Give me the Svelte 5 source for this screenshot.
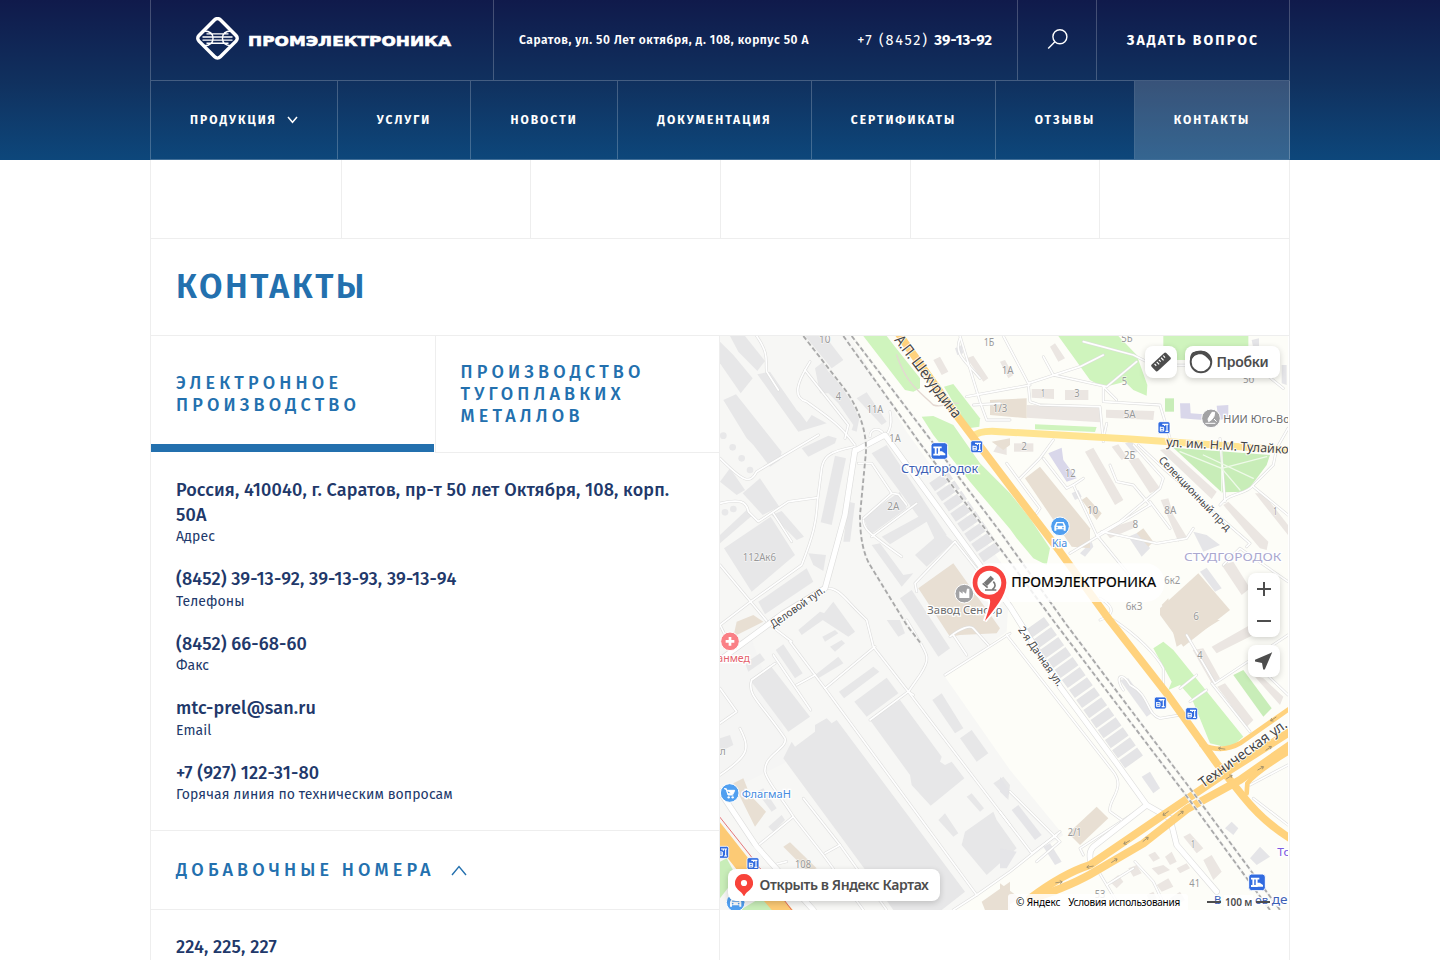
<script>
  const nav = [
    { t: 'Продукция', w: 187, arrow: true },
    { t: 'Услуги', w: 133 },
    { t: 'Новости', w: 147 },
    { t: 'Документация', w: 194 },
    { t: 'Сертификаты', w: 184 },
    { t: 'Отзывы', w: 139 },
    { t: 'Контакты', w: 155, active: true }
  ];
  const contacts = [
    ['Россия, 410040, г. Саратов, пр-т 50 лет Октября, 108, корп. 50А', 'Адрес'],
    ['(8452) 39-13-92, 39-13-93, 39-13-94', 'Телефоны'],
    ['(8452) 66-68-60', 'Факс'],
    ['mtc-prel@san.ru', 'Email'],
    ['+7 (927) 122-31-80', 'Горячая линия по техническим вопросам']
  ];

  // Map geometry uses three units per screen pixel.
  const industrial = [
    '0,85 0,20 40,60 98,130 62,175', '30,3 75,3 135,78 112,108 55,50',
    '10,195 48,178 185,350 180,375 150,395 100,330 80,310', '112,118 150,110 230,225 240,235 260,262 275,240 320,265 235,290',
    '255,3 315,3 370,75 335,100', '285,100 310,80 325,110 345,125 420,240 410,290 395,285 400,270 355,205 325,175 300,175',
    '410,190 440,172 500,260 485,270', '345,362 378,370 335,570 302,562', '245,340 325,302 350,310 345,325 265,365',
    '68,475 120,430 178,515 128,540', '12,640 152,545 225,660 95,770', '0,600 80,525 98,540 0,625',
    '155,540 185,528 252,605 230,615', '115,800 260,700 280,740 135,838', '455,355 500,330 680,600 650,625 620,560 510,628 485,605 595,545',
    '430,545 540,470 560,520 450,600', '585,660 665,590 700,620 620,695', '455,630 480,625 550,720 580,715 545,755',
    '385,500 405,505 390,620 370,620', '265,655 318,660 310,708 280,690', '0,440 30,400 75,465 50,480',
    '540,790 575,765 690,940 655,965', '235,885 300,830 330,840 245,900', '300,850 340,800 405,890 385,905', '90,1035 150,990 270,1145 205,1190',
    '167,945 190,928 248,1015 225,1030', '285,1020 355,965 370,985 295,1030', '307,905 345,885 355,895 315,920', '330,935 365,915 375,925 345,950',
    '75,985 120,955 135,975 85,1010', '357,1070 460,995 478,1010 372,1090', '403,1100 500,1028 535,1075 440,1145',
    '450,1155 540,1095 665,1265 660,1280 675,1290 695,1280 733,1330 632,1412 575,1350 570,1320',
    '190,1270 215,1220 225,1235 285,1190 285,1170 320,1150 335,1165 350,1155 735,1670 665,1725 520,1725 440,1610',
    '637,1095 665,1075 730,1180 705,1195', '720,1210 755,1185 805,1255 770,1280', '655,1455 675,1435 715,1495 700,1505', '740,1385 755,1375 792,1420 780,1430',
    '735,1490 820,1430 830,1455 890,1540 800,1620 725,1530', '820,1345 850,1325 870,1350 865,1395', '110,1370 130,1360 170,1420 155,1430', '145,1475 185,1440 195,1455 160,1490',
    '500,855 540,855 555,895 535,905', '0,1210 30,1200 40,1230 0,1250'
  ];
  const homes = [
    '740,70 760,62 805,130 790,140', '840,80 855,75 880,120 865,130', '640,75 660,65 685,110 665,120', '990,35 1005,25 1035,70 1015,80',
    '935,162 1002,162 1002,192 935,188', '1035,165 1105,165 1105,195 1035,195', '920,210 1140,215 1140,262 920,248', '1158,224 1303,228 1300,255 1158,248',
    '882,325 940,325 940,350 882,350', '1095,350 1120,338 1210,495 1185,510 1140,430', '1175,335 1195,328 1220,365 1205,375', '1225,375 1255,368 1320,460 1290,475',
    '1320,345 1345,340 1490,470 1475,492', '1322,495 1345,490 1360,540 1400,605 1375,620', '1510,510 1525,500 1645,620 1640,645 1620,640',
    '1150,585 1245,555 1240,580 1170,610', '1505,690 1540,680 1590,760 1565,780', '1605,475 1630,475 1704,570 1704,600', '820,350 840,315 860,340 860,360',
    '1475,935 1590,870 1610,895 1490,955', '1418,945 1450,940 1500,1030 1475,1045', '1492,1055 1515,1045 1600,1155 1580,1175', '1600,1020 1630,1030 1690,1085 1680,1110',
    '1390,1505 1410,1495 1450,1540 1430,1555', '1450,1575 1475,1560 1505,1610 1480,1635', '1225,1600 1250,1590 1265,1615 1240,1625', '1285,1560 1305,1550 1320,1570 1300,1580',
    '1295,1600 1330,1590 1350,1605 1315,1620', '1335,1565 1355,1550 1370,1580 1350,1590', '1310,1650 1345,1630 1360,1655 1325,1670', '1370,1600 1400,1585 1410,1600 1380,1615',
    '1280,1680 1300,1670 1310,1690 1290,1700', '1350,1690 1380,1670 1395,1695 1370,1710', '1170,1640 1195,1620 1210,1640 1190,1660'
  ];
  const grayHomes = [
    '1215,325 1235,318 1255,350 1240,355', '1225,605 1260,590 1290,640 1265,665', '1420,590 1460,600 1500,630 1450,650', '1440,710 1460,698 1505,760 1485,770',
    '1080,655 1115,620 1120,635 1095,665', '1055,475 1075,465 1085,485 1065,495', '1200,1035 1225,1030 1300,1130 1280,1145', '1265,1325 1290,1310 1320,1360 1300,1375',
    '1515,1480 1535,1460 1555,1480 1540,1500', '1590,1570 1620,1535 1650,1565 1610,1590', '1685,90 1700,90 1700,150 1685,145', '1595,15 1617,10 1617,40 1600,40',
    '875,1425 895,1410 965,1500 945,1515', '970,1535 990,1525 1025,1580 1005,1590', '840,1540 890,1550 860,1600 840,1600', '840,1325 870,1370 860,1390 840,1370', '705,40 725,30 730,55 712,60'
  ];
  const shops = [
    '595,760 700,685 840,880 830,895 720,900 690,905', '810,195 920,190 920,250 810,240', '915,430 960,395 1110,580 1110,640 1055,635',
    '1320,820 1435,715 1530,825 1390,935 1320,840', '1045,1495 1130,1415 1165,1450 1080,1530', '40,1345 70,1330 90,1380 138,1430 105,1475', '190,1535 210,1522 290,1600 265,1610',
    '785,1700 870,1640 870,1725 795,1725', '1325,810 1345,790 1350,820 1340,830', '1250,595 1270,580 1300,620 1285,635', '1370,935 1500,855 1350,855', '50,860 100,840 130,860 40,905', '815,320 870,310 870,330 850,345', '665,855 700,895 750,855', '1085,495 1100,485 1145,535 1130,555', '840,1645 900,1690 840,1725'
  ];
  const purple = ['1380,205 1410,205 1412,235 1450,238 1450,255 1382,250', '1490,212 1525,210 1525,250 1495,255', '985,355 1025,338 1030,375 1070,430 1040,440'];
  const greens = [
    '430,3 500,3 525,35 600,130 600,160 580,170 555,165', '672,155 700,147 780,250 778,275 745,280', '605,245 640,243 700,270 780,385 870,475 930,550 990,640 980,690 940,670 890,610 870,582 750,440 640,300',
    '1015,3 1195,3 1250,60 1282,150 1280,182 1240,165 1215,140 1150,157 1110,135', '1330,3 1585,3 1585,75 1330,75', '945,268 1130,276 1125,291 945,283',
    '1300,940 1330,920 1360,945 1570,1205 1530,1240 1470,1225 1415,1090 1380,1050 1345,1065 1355,1040'
  ];
  const parks = ['1360,338 1650,360 1640,390 1580,470 1505,472', '1335,190 1362,190 1362,230 1335,230', '1540,1020 1570,1005 1655,1120 1630,1145', '0,1580 20,1570 50,1625 0,1690', '60,1725 120,1690 180,1725', '980,1675 1000,1660 1010,1680 970,1690'];
  const lanes = [
    'M110,3 C150,60 135,80 140,110 L175,165', 'M270,80 C220,160 225,190 260,200 C330,250 360,270 405,330', 'M255,105 L385,270 L375,310', 'M295,300 L110,410 C90,450 70,440 0,370',
    'M405,335 C320,350 310,370 305,400 L292,500 C290,560 280,600 245,690 L85,805 L0,870', 'M0,505 C60,490 80,500 85,530 L115,560 L205,500 L292,488', 'M0,690 L150,870 L215,920', 'M160,535 L215,620',
    'M415,385 L455,385 L515,475 L535,478 L560,510', 'M430,550 L515,475', 'M430,555 C430,580 440,590 545,665', 'M455,605 L590,505', 'M705,620 L585,745 L590,770', 'M705,620 L800,740',
    'M325,760 C360,760 380,800 440,855 L460,935 L565,1070 L870,1470', 'M450,305 C450,280 480,270 500,310', 'M510,230 C520,280 500,300 495,300', 'M0,870 L30,930',
    'M210,920 L315,1060 L770,1680', 'M160,960 L272,1125', 'M315,1060 L465,935', 'M230,1050 L285,1020', 'M165,985 L95,1035 C80,1080 120,1100 195,1210 C205,1240 130,1260 135,1310 C140,1340 180,1380 220,1445 L310,1560 L430,1725',
    'M220,1445 L110,1535', 'M250,1390 L360,1530 L315,1555', 'M360,1530 L500,1725', 'M450,1155 L565,1070 L600,1020 C640,960 620,960 560,855', 'M565,1070 L580,1080', 'M60,1180 C90,1240 90,1260 0,1320', 'M0,1060 L50,1130 L0,1165',
    'M675,1020 L870,895', 'M690,905 C720,880 750,870 760,880 L805,930', 'M700,900 L740,960', 'M700,1725 L770,1680 L870,1610 L1020,1490', 'M720,10 C700,60 740,80 780,130', 'M720,3 L780,200 L800,255 L870,255', 'M850,3 L925,145 L1080,95 L1150,60', 'M740,185 L930,150', 'M970,65 L1000,120 L1160,155 L1250,80',
    'M840,205 L760,210', 'M925,150 L930,200 L960,210 L1140,215 L1150,320', 'M1150,155 L1150,200 L1320,210 L1350,310', 'M1150,155 L1190,195', 'M1090,20 L1240,60 L1300,90 L1600,92', 'M1590,80 L1690,160', 'M1160,265 L1150,310', 'M1000,315 L960,370 L900,430', 'M970,370 L1040,460 L1060,450 L1130,600 L1200,560 L1320,460 L1330,430 L1240,330', 'M1060,450 L1090,430 M1170,390 L1190,440 L1240,450 L1290,510', 'M860,385 C900,440 930,480 960,520 L950,535', 'M1050,655 L1290,510', 'M1130,600 L1260,760 L1300,740', 'M1145,590 L1310,625 L1400,610 L1420,580', 'M1255,330 L1330,400 L1590,625 L1580,635', 'M1500,510 C1530,470 1580,480 1600,450 L1660,390 L1670,340 L1704,280', 'M1500,310 L1515,500', 'M1600,455 L1704,540', 'M1510,690 L1560,640 L1704,740', 'M1290,500 L1350,580', 'M1140,855 C1180,840 1190,820 1140,790',
    'M860,900 L1180,1310 C1220,1360 1160,1400 1170,1430 L1205,1455', 'M1210,1065 C1180,1020 1210,1010 1230,1050 C1290,1080 1280,1140 1320,1150 L1380,1140', 'M1180,855 C1250,900 1310,960 1330,1000 L1330,1060', 'M1400,900 L1485,1045 L1704,900', 'M1380,1060 L1430,1020 M1410,1100 L1460,1065', 'M1475,1045 L1590,1190', 'M1590,970 L1704,1080', 'M870,1370 L1020,1520 L950,1580', 'M840,1430 L935,1555 L1010,1500', 'M1280,1410 L1080,1540 L1090,1560', 'M1590,1350 L1704,1290', 'M1600,1390 L1704,1470', 'M1130,1600 L1190,1700', 'M1245,1580 L1300,1640 L1340,1725', 'M115,1535 L160,1590 L200,1580', 'M1240,1600 L1160,1650'
  ];
  const sheds = ['M655,425 L820,665', 'M945,865 L1245,1285'];
  const numbers = [
    ['10', 314, 24, 34], ['4', 355, 195, 16], ['11А', 465, 235, 50], ['1А', 525, 322, 34], ['2А', 520, 526, 36], ['112Ак6', 118, 678, 100], ['1Б', 807, 32, 32], ['1А', 863, 116, 36],
    ['5Б', 1221, 20, 34], ['5', 1213, 150, 16], ['1', 969, 186, 12], ['3', 1071, 187, 16], ['1/3', 840, 230, 44], ['5А', 1229, 250, 36], ['5б', 1586, 143, 34], ['2', 912, 346, 17], ['2Б', 1229, 373, 34], ['12', 1051, 427, 32],
    ['10', 1118, 537, 32], ['8А', 1351, 537, 36], ['8', 1246, 580, 17], ['1', 1666, 539, 12], ['6к2', 1357, 746, 48], ['6к3', 1242, 826, 50], ['6', 1428, 855, 17], ['4', 1440, 973, 16], ['2/1', 1064, 1504, 42], ['1', 1419, 1538, 12], ['41', 1424, 1657, 32], ['108', 249, 1599, 48], ['53', 1140, 1690, 32], ['л', 8, 1260, 18]
  ];
  const arrows = [[1337,1435,145],[1220,1522,150],[1110,1595,170],[1017,1642,-8],[1382,1435,-38],[1277,1513,-38],[1183,1577,-32],[1528,1326,-32],[1646,1240,-34],[1622,1300,-30],[1660,1152,145],[1505,1241,188]];
  const stops = [[770, 335], [1332, 278], [1321, 1104], [1415, 1136], [8, 1552], [99, 1586]];
  const railways = ['M370 3L600 325L840 640L1010 870L1390 1370L1650 1725', 'M395 3L640 325L840 590L1040 870L1410 1360L1680 1725', 'M250 3L380 170Q440 260 438 350L420 540Q420 640 450 690L560 870L603 926'];
</script>

<div class="page">
  <header>
    <div class="wrap">
      <div class="top">
        <div class="logo">
          <svg width="256" height="44" viewBox="0 0 256 44">
            <g fill="none" stroke="#fff">
              <rect x="6.400" y="6.200" width="30.200" height="30.200" rx="4" stroke-width="3.500" transform="rotate(45 21.500 21.300)" />
              <path stroke-width="1.400" d="M10.500 16.900H32.500M6.500 20H36.500M6.500 23.100H36.500M10.500 26.200H32.500M8 14Q17 14 17 21.500Q17 28.500 8 28.800M35 14Q26.500 14 26.500 21.500Q26.500 28.500 35 28.800" />
            </g>
            <text x="52" y="29" class="brand" textLength="203" lengthAdjust="spacingAndGlyphs">ПРОМЭЛЕКТРОНИКА</text>
          </svg>
        </div>
        <div class="info">
          <span class="addr">Саратов, ул. 50 Лет октября, д. 108, корпус 50 А</span>
          <span class="tel">+7 (8452) <b>39-13-92</b></span>
        </div>
        <button class="find" aria-label="Поиск">
          <svg width="22" height="22" viewBox="0 0 22 22" fill="none" stroke="#fff" stroke-width="1.400"><circle cx="13.900" cy="8.700" r="7" /><path d="M8.900 13.700L2.200 20.500" /></svg>
        </button>
        <button class="ask">Задать вопрос</button>
      </div>
      <nav>
        {#each nav as n}
          <a href="#top" class:active={n.active} style="width:{n.w}px">
            <span>{n.t}</span>
            {#if n.arrow}<svg width="11" height="8" viewBox="0 0 11 8" fill="none" stroke="#fff" stroke-width="1.500"><path d="M1 1L5.500 6.300L10 1" /></svg>{/if}
          </a>
        {/each}
      </nav>
    </div>
  </header>

  <main>
    <div class="strip"><i></i><i></i><i></i><i></i><i></i></div>
    <div class="title"><h1>Контакты</h1></div>
    <div class="cols">
      <section class="left">
        <div class="tabs">
          <div class="tab on"><span>Электронное<br />производство</span></div>
          <div class="tab"><span>Производство<br />тугоплавких<br />металлов</span></div>
        </div>
        <div class="list">
          {#each contacts as [v, l]}
            <div class="item"><strong>{v}</strong><small>{l}</small></div>
          {/each}
        </div>
        <div class="more">
          <span>Добавочные номера</span>
          <svg width="16" height="11" viewBox="0 0 16 11" fill="none" stroke="#2370ae" stroke-width="1.400"><path d="M1 10L8 1.500L15 10" /></svg>
        </div>
        <div class="list"><div class="item"><strong>224, 225, 227</strong></div></div>
      </section>

      <section class="map">
        <svg class="canvas" width="568" height="574" viewBox="0 3 1704 1722">
          <rect y="3" width="1704" height="1722" fill="#fdfdf8" />
          <path fill="#f7f7f5" d="M0 3H390L560 290L870 720L860 890L675 1025L870 1305L1030 1500L700 1725H0Z" />
          <path fill="#f3f3f3" opacity=".7" d="M0 950L90 900L220 1270L0 1380Z" />
          {#each greens as p}<polygon points={p} fill="#cff4bd" />{/each}
          {#each parks as p}<polygon points={p} fill="#c8edb8" />{/each}
          {#each industrial as p}<polygon points={p} fill="#e7e7e8" />{/each}
          {#each homes as p}<polygon points={p} fill="#ebe6e2" />{/each}
          {#each grayHomes as p}<polygon points={p} fill="#e5e5e8" />{/each}
          {#each shops as p}<polygon points={p} fill="#e8dfd3" />{/each}
          {#each purple as p}<polygon points={p} fill="#d9d7ea" />{/each}
          {#each [[10, 302], [38, 337], [65, 370], [90, 405], [15, 532], [40, 522]] as [x, y]}<circle cx={x} cy={y} r="10" fill="#e8e8e9" />{/each}
          {#each sheds as d}<path {d} fill="none" stroke="#e4e4e6" stroke-width="66" stroke-dasharray="30 7" />{/each}
          <g fill="none" stroke-linejoin="round" stroke-linecap="round">
            {#each lanes as d}<path {d} stroke="#dededd" stroke-width="8.500" />{/each}
            {#each lanes as d}<path {d} stroke="#fff" stroke-width="5" />{/each}
            <path stroke="#eefae8" stroke-width="4" d="M1380 350L1505 400L1640 365M1505 350V470M1450 360L1600 430M1505 400L1560 465" />
            <g stroke="#dededd" stroke-width="19">
              <path d="M410 345L495 300L870 815L1020 1055L1190 1285L1280 1410L1350 1450L1370 1530L1490 1670M1280 1410L1120 1535Q1105 1550 1112 1580" />
              <path d="M405 345L375 540L315 760L190 835L0 975" />
              <path d="M0 1370L110 1535L280 1725" />
            </g>
            <g stroke="#fff" stroke-width="15">
              <path d="M410 345L495 300L870 815L1020 1055L1190 1285L1280 1410L1350 1450L1370 1530L1490 1670M1280 1410L1120 1535Q1105 1550 1112 1580" />
              <path d="M405 345L375 540L315 760L190 835L0 975" />
              <path d="M0 1370L110 1535L280 1725" />
            </g>
            <path stroke="#fcca75" stroke-width="48" d="M-20 1475L70 1590L200 1740" />
            <path stroke="#f7f7f5" stroke-width="18" d="M0 1440L110 1560L250 1740" />
            <path stroke="#e05b60" stroke-width="2.500" d="M0 1447L90 1560L215 1725" />
            <path stroke="#e4d8d2" stroke-width="4" d="M530 60C560 150 600 170 640 210C670 220 690 200 715 205" />
            <path stroke="#ffe491" stroke-width="21" d="M760 305Q775 285 840 290L1230 312L1704 345" />
            <path stroke="#ffd27d" stroke-width="23" d="M535 -5L715 248L860 440L1020 650L1170 857L1340 1075L1490 1285L1570 1385Q1630 1460 1710 1510" />
            <path stroke="#ffd27d" stroke-width="24" d="M930 1690Q1030 1615 1110 1590L1330 1440L1530 1305L1710 1190" />
            <path stroke="#ffd27d" stroke-width="24" d="M940 1690Q1060 1650 1130 1607L1270 1525L1400 1423L1560 1335L1710 1230" />
            <path stroke="#ffd27d" stroke-width="14" d="M1445 1230Q1510 1255 1560 1225L1710 1120M1580 1375L1582 1345Q1610 1310 1710 1250" />
          </g>
          <g fill="none">
            {#each railways as d}
              <path {d} stroke="#f4f4f2" stroke-width="8" />
              <path {d} stroke="#a9a9a9" stroke-width="5.500" stroke-dasharray="14 8" />
            {/each}
          </g>
          {#each arrows as [x, y, r]}<g transform="translate({x} {y}) rotate({r})"><path d="M-11 0H9M3 -5L10 0L3 5" fill="none" stroke="#a08f6c" stroke-width="2.500" /></g>{/each}

          <g class="num">
            {#each numbers as [t, x, y, w]}<text {x} {y} textLength={w} lengthAdjust="spacingAndGlyphs">{t}</text>{/each}
          </g>
          <g class="street">
            <text transform="translate(522 16) rotate(52.500)" textLength="298" lengthAdjust="spacingAndGlyphs" font-size="45">А.П. Шехурдина</text>
            <text transform="translate(1338 334) rotate(3.500)" textLength="368" lengthAdjust="spacingAndGlyphs" font-size="38">ул. им. Н.М. Тулайко</text>
            <text transform="translate(1314 377) rotate(46)" textLength="296" lengthAdjust="spacingAndGlyphs" font-size="32">Селекционный пр-д</text>
            <text transform="translate(160 880) rotate(-35)" textLength="192" lengthAdjust="spacingAndGlyphs" font-size="32">Деловой туп.</text>
            <text transform="translate(893 884) rotate(55)" textLength="210" lengthAdjust="spacingAndGlyphs" font-size="32">2-я Дачная ул.</text>
            <text transform="translate(1450 1360) rotate(-36)" textLength="315" lengthAdjust="spacingAndGlyphs" font-size="43">Техническая ул.</text>
          </g>
          <g class="poi">
            <text x="543" y="414" font-size="36" fill="#3d5fb5" textLength="232" lengthAdjust="spacingAndGlyphs">Студгородок</text>
            <text x="1392" y="679" font-size="35" fill="#aaa8cf" textLength="292" lengthAdjust="spacingAndGlyphs">СТУДГОРОДОК</text>
            <text x="1510" y="264" font-size="32" fill="#6c6c6c" textLength="230" lengthAdjust="spacingAndGlyphs">НИИ Юго-Вост</text>
            <text x="996" y="636" font-size="32" fill="#458be0" textLength="46" lengthAdjust="spacingAndGlyphs">Kia</text>
            <text x="622" y="838" font-size="32" fill="#6c6c6c" textLength="225" lengthAdjust="spacingAndGlyphs">Завод Сенсор</text>
            <text x="-8" y="981" font-size="32" fill="#e4626b" textLength="98" lengthAdjust="spacingAndGlyphs">анмед</text>
            <text x="65" y="1388" font-size="32" fill="#458be0" textLength="148" lengthAdjust="spacingAndGlyphs">ФлагмаН</text>
            <text x="1672" y="1563" font-size="32" fill="#7b5be0" textLength="62" lengthAdjust="spacingAndGlyphs">Топ</text>
            <text x="1482" y="1708" font-size="34" fill="#3d5fb5">В</text>
            <text x="1605" y="1708" font-size="34" fill="#3d5fb5" textLength="40" lengthAdjust="spacingAndGlyphs">ов</text>
            <text x="1655" y="1708" font-size="36" fill="#3d5fb5" textLength="72" lengthAdjust="spacingAndGlyphs">деп</text>
          </g>
          <g stroke="#fff" stroke-width="3">
            <circle cx="1020" cy="574" r="28" fill="#509ff0" />
            <circle cx="29" cy="1374" r="28" fill="#509ff0" />
            <circle cx="47" cy="1702" r="28" fill="#509ff0" />
            <circle cx="30" cy="919" r="28" fill="#fa8086" />
            <circle cx="1473" cy="250" r="28" fill="#a2a2a4" />
            <circle cx="733" cy="776" r="28" fill="#a2a2a4" />
          </g>
          {#each [[1020, 574], [47, 1702]] as [x, y]}
            <g transform="translate({x} {y})"><path d="M-17 13V-1L-11 -13H11L17 -1V13H11V9H-11V13Z" fill="#fff" /><path d="M-8 -9H8L11 -2H-11Z" fill="#509ff0" /><circle cx="-9" cy="4" r="2.500" fill="#509ff0" /><circle cx="9" cy="4" r="2.500" fill="#509ff0" /></g>
          {/each}
          <path d="M12 1361H19L24 1380H40M20 1366H44L40 1376H23Z" fill="#fff" stroke="#fff" stroke-width="3" /><circle cx="26" cy="1387" r="3.500" fill="#fff" /><circle cx="38" cy="1387" r="3.500" fill="#fff" />
          <path d="M30 906V932M17 919H43" stroke="#fff" stroke-width="8" />
          <path d="M1484 232L1482 244Q1478 254 1466 260L1464 252L1476 232ZM1456 265H1486M1482 252L1490 260" fill="#fff" stroke="#fff" stroke-width="3" />
          <path d="M718 789V769L728 776V769L738 776L741 761H748V789Z" fill="#fff" />

          {#each [[658, 348], [1611, 1642]] as [x, y]}
            <g transform="translate({x} {y})"><rect x="-25" y="-25" width="50" height="50" rx="9" fill="#316be0" stroke="#fff" stroke-width="3" /><path d="M-18 -11H7M-11 -11V10M-1 -11V2M-18 11H2" fill="none" stroke="#fff" stroke-width="5.500" /><path d="M-4 13V1H8L18 8V13Z" fill="#fff" /></g>
          {/each}
          {#each stops as [x, y]}
            <g transform="translate({x} {y})"><rect x="-18" y="-18" width="36" height="36" rx="6" fill="#316be0" stroke="#fff" stroke-width="2.500" /><path d="M-5 -10H13M9 -10V10M4 11H13M2 -10V-5" fill="none" stroke="#fff" stroke-width="3.500" /><path d="M-11 -3V11M-11 -1H-1V10H-11M-11 5H-2" fill="none" stroke="#fff" stroke-width="3" /></g>
          {/each}

          <rect x="755" y="685" width="578" height="116" rx="56" fill="#fff" opacity=".82" />
          <path d="M809 688C777 688 753 713 753 744C753 773 774 794 802 797C810 806 797 829 789 857L800 861C826 826 863 792 863 744C863 713 840 688 809 688Z" fill="#fff" />
          <path d="M808 692C780 692 758 715 758 743C758 770 780 791 806 792C814 793 812 808 795 858C822 823 859 783 859 743C859 715 836 692 808 692Z" fill="#f8433f" />
          <circle cx="808" cy="743" r="36" fill="#fff" />
          <g fill="none" stroke="#777"><path stroke-width="14" d="M796 748L817 727" /><path stroke-width="5" d="M820 740Q832 752 817 764M795 765H829M788 745L803 758" /></g>
          <text x="874" y="757" class="place" textLength="434" lengthAdjust="spacingAndGlyphs">ПРОМЭЛЕКТРОНИКА</text>
        </svg>

        <button class="ctl ruler" aria-label="Линейка">
          <svg width="20" height="20" viewBox="0 0 20 20"><g transform="rotate(-43 10 10)"><rect x="0" y="5.500" width="20" height="9" rx="1.500" fill="#4d4d4d" /><path d="M4 7V9.500M7 7V10.500M10 7V9.500M13 7V10.500M16 7V9.500" stroke="#fff" stroke-width="1.200" /></g></svg>
        </button>
        <button class="ctl jams">
          <svg width="24" height="24" viewBox="0 0 24 24" fill="none"><circle cx="12" cy="12" r="10.300" stroke="#4d4d4d" stroke-width="1.900" /><path d="M1 8.500C1.500 4.500 3 2 5 2C7 1 9 .8 12 .8C17 .8 22 4.500 23 11L22.500 14C20.500 9.500 17 6 13.500 4.500C9 3.300 4 5.500 2 10.500Z" fill="#4d4d4d" /></svg>
          <span>Пробки</span>
        </button>
        <div class="ctl zoom">
          <button aria-label="Приблизить"><svg width="14" height="14" viewBox="0 0 14 14"><path d="M0 7H14M7 0V14" stroke="#4d4d4d" stroke-width="2" /></svg></button>
          <button aria-label="Отдалить"><svg width="14" height="14" viewBox="0 0 14 14"><path d="M0 7H14" stroke="#4d4d4d" stroke-width="2" /></svg></button>
        </div>
        <button class="ctl geo" aria-label="Моё местоположение">
          <svg width="18" height="18" viewBox="0 0 18 18"><path d="M17.200 .3L0 7.700V9.400L7 11L8.200 17.500H9.800Z" fill="#4d4d4d" /></svg>
        </button>
        <button class="ctl open">
          <svg width="18" height="22" viewBox="0 0 18 22"><path d="M9 0A9 9 0 0 0 3 15.700C5.500 17.800 7.500 19 8.400 21.500Q9 22.500 9.600 21.500C10.500 19 12.500 17.800 15 15.700A9 9 0 0 0 9 0Z" fill="#f8433a" /><circle cx="9" cy="9" r="3.100" fill="#fff" /></svg>
          <span>Открыть в Яндекс Картах</span>
        </button>
        <div class="copy"><span>© Яндекс</span><span>Условия использования</span></div>
        <div class="scale"><i></i><span>100 м</span><i></i></div>
      </section>
    </div>
  </main>
</div>

<style>
  :global(body) { margin: 0; background: #fff; overflow: hidden; }
  .page { height: 960px; overflow: hidden; font-family: "Fira Sans", "Open Sans", "Noto Sans", sans-serif; color: #21386a; }
  button { border: 0; background: none; padding: 0; font: inherit; color: inherit; display: flex; align-items: center; justify-content: center; }
  header { height: 160px; background: linear-gradient(#101a4b, #10315f 52%, #0d477b); color: #fff; }
  .wrap { width: 1140px; height: 160px; margin: 0 auto; box-sizing: border-box; border-left: 1px solid #ffffff38; border-bottom: 1px solid #ffffff38; }
  .top { display: flex; height: 80px; border-bottom: 1px solid #ffffff38; }
  .top > * { border-right: 1px solid #ffffff38; box-sizing: border-box; }
  .logo { width: 343px; padding: 17px 0 0 45px; }
  .brand { font: 900 14.500px "DejaVu Sans", sans-serif; fill: #fff; stroke: #fff; stroke-width: .6; }
  .info { width: 524px; display: flex; align-items: center; justify-content: space-between; padding: 0 25px; white-space: nowrap; }
  .addr { font-size: 12px; font-weight: 600; letter-spacing: .54px; }
  .tel { font-size: 14.500px; letter-spacing: 1.750px; }
  .tel b { font-size: 15px; font-weight: 700; letter-spacing: 0; }
  .find { width: 79px; padding-bottom: 3px; }
  .ask { width: 193px; font-size: 14px; font-weight: 700; letter-spacing: 2.100px; text-transform: uppercase; }
  nav { display: flex; height: 78px; }
  nav a { box-sizing: border-box; border-right: 1px solid #ffffff38; display: flex; align-items: center; justify-content: center; gap: 10px; color: #fff; text-decoration: none; text-transform: uppercase; font-size: 12px; font-weight: 700; letter-spacing: 2px; }
  nav a.active { background: #ffffff2b; }

  main { width: 1138px; margin: 0 auto; border: solid #eee; border-width: 0 1px; }
  .strip { display: flex; height: 78px; border-bottom: 1px solid #eee; }
  .strip i { width: 190px; box-sizing: border-box; border-right: 1px solid #eee; }
  .strip i:first-child { width: 191px; }
  .strip i:nth-child(2), .strip i:last-child { width: 189px; }
  .title { height: 96px; border-bottom: 1px solid #eee; display: flex; align-items: center; padding-left: 25px; }
  h1 { margin: 0; font-size: 34px; font-weight: 600; letter-spacing: 2.550px; line-height: 1; text-transform: uppercase; color: #2370ae; }
  .cols { display: flex; }
  .left { width: 568px; height: 700px; border-right: 1px solid #eee; }
  .tabs { display: flex; height: 117px; }
  .tab { box-sizing: border-box; width: 284px; border-bottom: 1px solid #eee; padding-left: 25px; display: flex; align-items: center; font-size: 18px; line-height: 22px; font-weight: 500; letter-spacing: 4.150px; color: #2370ae; text-transform: uppercase; }
  .tab.on { width: 285px; border-right: 1px solid #eee; border-bottom: 0; position: relative; padding-bottom: 1px; }
  .tab.on::after { content: ""; position: absolute; left: 0; right: 1px; bottom: 1px; height: 8px; background: #2370ae; }
  .list { padding: 25px 25px 25px; }
  .item { margin-bottom: 20.200px; }
  .item:last-child { margin: 0; }
  .item strong { display: block; font-size: 18px; line-height: 24.700px; font-weight: 500; letter-spacing: .125px; }
  .item small { display: block; font-size: 14px; line-height: 20px; margin-bottom: -.4px; letter-spacing: .09px; }
  .more { height: 78px; border: solid #eee; border-width: 1px 0; padding-left: 25px; display: flex; align-items: center; gap: 14px; color: #2370ae; font-size: 18px; font-weight: 500; letter-spacing: 4.140px; text-transform: uppercase; }
  .more svg { padding-top: 1px; margin-left: 2px; }

  .map { position: relative; width: 568px; height: 574px; font-family: "Noto Sans", sans-serif; }
  .canvas { display: block; }
  .num { font-size: 30px; fill: #999; text-anchor: middle; stroke: #fff; stroke-width: 4; stroke-opacity: .6; paint-order: stroke; }
  .street { fill: #444; stroke: #fff; stroke-width: 6; paint-order: stroke; stroke-opacity: .85; }
  .poi { stroke: #fff; stroke-width: 7; paint-order: stroke; }
  .place { font-size: 42px; fill: #000; stroke: #000; stroke-width: .7; }
  .ctl { position: absolute; background: #fff; border-radius: 8px; box-shadow: 0 2px 6px #0000002e; color: #4d4d4d; font-size: 14px; font-weight: 600; letter-spacing: -.42px; white-space: nowrap; }
  .ruler { left: 425px; top: 10px; width: 32px; height: 32px; }
  .jams { left: 465px; top: 10px; width: 95px; height: 32px; gap: 4px; padding: 0 8px 2px 0; box-sizing: border-box; letter-spacing: -.3px; }
  .jams svg { position: relative; top: 1px; }
  .zoom { left: 528px; top: 237px; width: 32px; height: 64px; }
  .zoom button { width: 32px; height: 32px; }
  .geo { left: 528px; top: 309px; width: 32px; height: 32px; }
  .open { left: 8px; top: 533px; width: 212px; height: 32px; gap: 7px; box-sizing: border-box; padding-right: 5px; }
  .open span { line-height: 18px; padding-bottom: 1px; }
  .copy { position: absolute; left: 288px; top: 558px; width: 180px; height: 16px; box-sizing: border-box; padding-left: 8px; display: flex; gap: 8px; align-items: center; background: #ffffffd9; border-radius: 3px 3px 0 0; font-size: 10px; letter-spacing: -.26px; color: #000; white-space: nowrap; }
  .copy span:first-child { letter-spacing: -.1px; }
  .scale { position: absolute; left: 487px; top: 558px; height: 16px; display: flex; align-items: center; gap: 3px; font-size: 10px; font-weight: 600; color: #4d4d4d; }
  .scale i { width: 14px; height: 2px; background: #4d4d4d; }
  .scale span { background: #fff; line-height: 14px; padding: 0 1px; letter-spacing: -.15px; }
</style>
